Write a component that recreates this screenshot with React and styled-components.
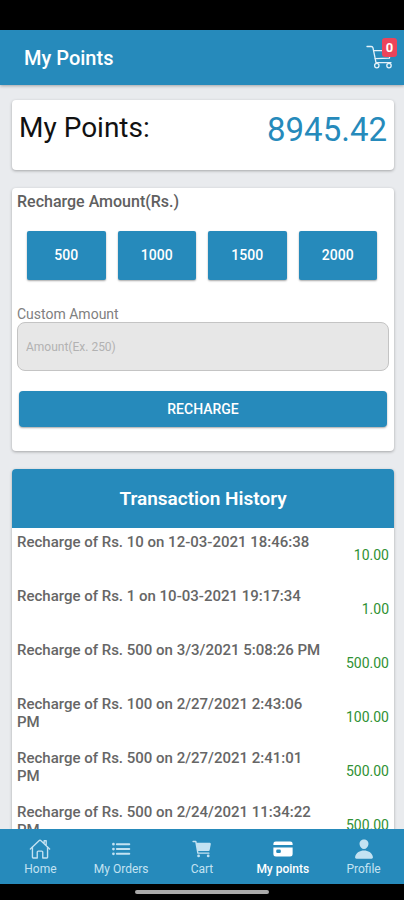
import React, { useState } from 'react';
import styled, { createGlobalStyle } from 'styled-components';
import { IoCard, IoCart, IoHomeOutline, IoList, IoPerson } from 'react-icons/io5';

const AMOUNTS = [500, 1000, 1500, 2000];

const TRANSACTIONS = [
  { id: 1, text: 'Recharge of Rs. 10 on 12-03-2021 18:46:38', amount: '10.00' },
  { id: 2, text: 'Recharge of Rs. 1 on 10-03-2021 19:17:34', amount: '1.00' },
  { id: 3, text: 'Recharge of Rs. 500 on 3/3/2021 5:08:26 PM', amount: '500.00' },
  { id: 4, text: 'Recharge of Rs. 100 on 2/27/2021 2:43:06 PM', amount: '100.00' },
  { id: 5, text: 'Recharge of Rs. 500 on 2/27/2021 2:41:01 PM', amount: '500.00' },
  { id: 6, text: 'Recharge of Rs. 500 on 2/24/2021 11:34:22 PM', amount: '500.00' },
];

const TABS = [
  { id: 'home', label: 'Home', Icon: IoHomeOutline },
  { id: 'orders', label: 'My Orders', Icon: IoList },
  { id: 'cart', label: 'Cart', Icon: IoCart },
  { id: 'points', label: 'My points', Icon: IoCard },
  { id: 'profile', label: 'Profile', Icon: IoPerson },
];

function App() {
  const [amount, setAmount] = useState('');
  const [tab, setTab] = useState('points');

  return (
    <Screen>
      <GlobalStyle />
      <StatusBar />

      <Header>
        <HeaderTitle>My Points</HeaderTitle>
        <CartButton type="button" aria-label="Cart">
          <CartIcon />
          <Badge>0</Badge>
        </CartButton>
      </Header>

      <Content>
        <BalanceCard>
          <BalanceLabel>My Points:</BalanceLabel>
          <BalanceValue>8945.42</BalanceValue>
        </BalanceCard>

        <RechargeCard>
          <CardTitle>Recharge Amount(Rs.)</CardTitle>
          <AmountGrid>
            {AMOUNTS.map(value => (
              <AmountButton key={value} type="button" onClick={() => setAmount(String(value))}>{value}</AmountButton>
            ))}
          </AmountGrid>
          <FieldLabel htmlFor="custom-amount">Custom Amount</FieldLabel>
          <AmountInput
            id="custom-amount"
            inputMode="numeric"
            placeholder="Amount(Ex. 250)"
            value={amount}
            onChange={e => setAmount(e.target.value)}
          />
          <RechargeButton type="button">RECHARGE</RechargeButton>
        </RechargeCard>

        <Card>
          <HistoryTitle>Transaction History</HistoryTitle>
          <HistoryList>
            {TRANSACTIONS.map(item => (
              <HistoryRow key={item.id}>
                <HistoryText>{item.text}</HistoryText>
                <HistoryAmount>{item.amount}</HistoryAmount>
              </HistoryRow>
            ))}
          </HistoryList>
        </Card>
      </Content>

      <TabBar>
        {TABS.map(({ id, label, Icon }) => (
          <TabButton key={id} type="button" $active={tab === id} onClick={() => setTab(id)}>
            <Icon />
            {label}
          </TabButton>
        ))}
      </TabBar>

      <GestureBar><GestureHandle /></GestureBar>
    </Screen>
  );
}

const CartIcon = () => (
  <svg viewBox="0 0 26 24" fill="none" stroke="currentColor" strokeWidth="1.3" strokeLinecap="round" strokeLinejoin="round">
    <path d="M1 1.5h4.2c1 0 1.6.5 1.8 1.4L10 17.6h15" />
    <path d="M7.6 5.6H25l-1.6 7.6L9.2 13.6" />
    <circle cx="10.8" cy="20.6" r="2.2" />
    <circle cx="23" cy="20.6" r="2.2" />
  </svg>
);

const GlobalStyle = createGlobalStyle`
  * {
    box-sizing: border-box;
  }

  body {
    margin: 0;
    background-color: #e9ebee;
    font-family: Roboto, "Liberation Sans", sans-serif;
  }

  button, input {
    font-family: inherit;
  }
`;

const Screen = styled.div`
  display: flex;
  flex-direction: column;
  height: 100vh;
`;

const StatusBar = styled.div`
  flex: none;
  height: 30px;
  background-color: #000;
`;

const Header = styled.header`
  flex: none;
  display: flex;
  align-items: center;
  justify-content: space-between;
  height: 55px;
  padding: 0 7px 0 24px;
  background-color: #268abb;
  color: #fff;
  box-shadow: 0 1px 3px rgba(0, 0, 0, 0.3);
  z-index: 1;
`;

const HeaderTitle = styled.h1`
  margin: 0;
  font-size: 20px;
  font-weight: 500;
`;

const CartButton = styled.button`
  position: relative;
  display: flex;
  padding: 0 5px 2px 0;
  border: none;
  background: none;
  color: #e4f2f9;
  cursor: pointer;

  svg {
    width: 26px;
    height: 24px;
  }
`;

const Badge = styled.span`
  position: absolute;
  top: -7px;
  right: 0;
  width: 15px;
  border-radius: 3px;
  background-color: #eb445a;
  color: #fff;
  font-size: 13px;
  font-weight: 700;
  line-height: 19px;
  text-align: center;
`;

const Content = styled.main`
  flex: 1;
  min-height: 0;
  display: flex;
  flex-direction: column;
  gap: 18px;
  padding: 15px 10px 0 12px;
  overflow-y: auto;
  scrollbar-width: none;
`;

const Card = styled.section`
  flex: none;
  border-radius: 4px;
  background-color: #fff;
  box-shadow: 0 1px 3px rgba(0, 0, 0, 0.3);
`;

const BalanceCard = styled(Card)`
  display: flex;
  justify-content: space-between;
  padding: 8px 7px 20px;
  line-height: 40px;
`;

const BalanceLabel = styled.span`
  color: #111;
  font-size: 28px;
`;

const BalanceValue = styled.span`
  padding-top: 2px;
  color: #268abb;
  font-size: 33px;
`;

const RechargeCard = styled(Card)`
  display: flex;
  flex-direction: column;
  padding: 4px 5px 24px;
`;

const CardTitle = styled.h2`
  margin: 0;
  color: #606060;
  font-size: 16px;
  font-weight: 500;
  line-height: 20px;
`;

const AmountGrid = styled.div`
  display: grid;
  grid-template-columns: repeat(4, 1fr);
  gap: 12px;
  padding: 19px 12px 26px 10px;
`;

const PrimaryButton = styled.button`
  border: none;
  background-color: #268abb;
  color: #fff;
  font-size: 14px;
  font-weight: 500;
  box-shadow: 0 1px 2px rgba(0, 0, 0, 0.35);
  cursor: pointer;
`;

const AmountButton = styled(PrimaryButton)`
  height: 49px;
  border-radius: 2px;
  padding: 0 0 2px;
`;

const FieldLabel = styled.label`
  color: #808080;
  font-size: 14px;
  line-height: 16px;
`;

const AmountInput = styled.input`
  height: 49px;
  padding: 0 8px;
  border: 1px solid #c4c4c4;
  border-radius: 8px;
  background-color: #e7e7e7;
  color: #444;
  font-size: 12px;

  &::placeholder {
    color: #b2b2b2;
  }
`;

const RechargeButton = styled(PrimaryButton)`
  height: 36px;
  margin: 20px 2px 0;
  border-radius: 4px;
`;

const HistoryTitle = styled.h2`
  margin: 0;
  border-radius: 4px 4px 0 0;
  background-color: #268abb;
  color: #fff;
  font-size: 19px;
  font-weight: 600;
  line-height: 59px;
  text-align: center;
`;

const HistoryList = styled.ul`
  margin: 0;
  padding: 5px;
  list-style: none;
`;

const HistoryRow = styled.li`
  display: grid;
  grid-template-columns: 5fr 1fr;
  min-height: 54px;
`;

const HistoryText = styled.span`
  color: #666;
  font-size: 15px;
  font-weight: 500;
  line-height: 18px;
`;

const HistoryAmount = styled.span`
  padding-top: 13px;
  color: #2f9133;
  font-size: 14px;
  line-height: 18px;
  text-align: right;
`;

const TabBar = styled.nav`
  flex: none;
  display: flex;
  height: 55px;
  background-color: #268abb;
`;

const TabButton = styled.button`
  flex: 1;
  display: flex;
  flex-direction: column;
  align-items: center;
  justify-content: center;
  gap: 2px;
  padding: 0;
  border: none;
  background: none;
  color: ${props => (props.$active ? '#fff' : '#c3e2f2')};
  font-size: 12px;
  font-weight: ${props => (props.$active ? 500 : 400)};
  cursor: pointer;

  svg {
    width: 22px;
    height: 22px;
  }
`;

const GestureBar = styled.div`
  flex: none;
  display: flex;
  align-items: center;
  justify-content: center;
  height: 16px;
  background-color: #000;
`;

const GestureHandle = styled.div`
  width: 33%;
  height: 4px;
  border-radius: 2px;
  background-color: #a9a9a9;
`;

export default App;
